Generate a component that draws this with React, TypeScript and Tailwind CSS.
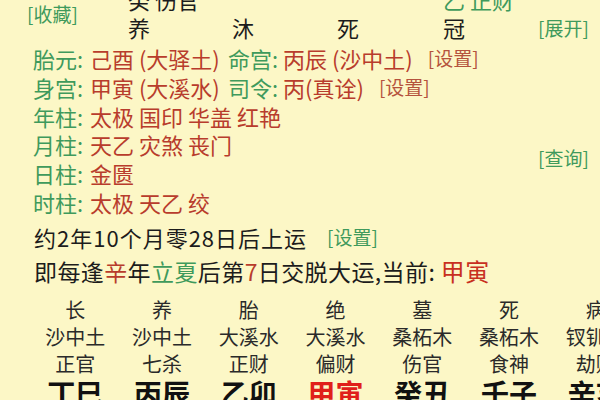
import React from 'react';

const GREEN = 'text-[#3f9a5c]';
const RED = 'text-[#b83c2c]';

const topCols = ['养', '沐', '死', '冠'];

const pillarRows = [
  { label: '年柱', items: ['太极', '国印', '华盖', '红艳'] },
  { label: '月柱', items: ['天乙', '灾煞', '丧门'] },
  { label: '日柱', items: ['金匮'] },
  { label: '时柱', items: ['太极', '天乙', '绞'] },
];

const grid = [
  { stage: '长', nayin: '沙中土', god: '正官', gz: '丁巳' },
  { stage: '养', nayin: '沙中土', god: '七杀', gz: '丙辰' },
  { stage: '胎', nayin: '大溪水', god: '正财', gz: '乙卯' },
  { stage: '绝', nayin: '大溪水', god: '偏财', gz: '甲寅', current: true },
  { stage: '墓', nayin: '桑柘木', god: '伤官', gz: '癸丑' },
  { stage: '死', nayin: '桑柘木', god: '食神', gz: '壬子' },
  { stage: '病', nayin: '钗钏金', god: '劫财', gz: '辛亥' },
];

export default function App() {
  return (
    <div className="w-[600px] h-[400px] overflow-hidden bg-[#fcf7c6] text-[#1c1c1c] font-['Noto_Sans_CJK_SC','Noto_Sans',sans-serif]">
      {/* hidden stems + growth stages */}
      <div className="grid grid-cols-[128px_104px_105px_106px_95px_62px] grid-rows-[28px_28px] -mt-[15px] text-[22px] leading-[28px]">
        <div className={`row-span-2 self-center pl-[27px] pt-[2px] text-[19px] leading-[20px] ${GREEN}`}>[收藏]</div>
        <div className="whitespace-nowrap">癸 伤官</div>
        <div />
        <div />
        <div className={`whitespace-nowrap ${GREEN}`}>乙 正财</div>
        <div />
        {topCols.map(c => (
          <div key={c}>{c}</div>
        ))}
        <div className={`text-[19px] pt-[1px] whitespace-nowrap ${GREEN}`}>[展开]</div>
      </div>

      {/* info rows */}
      <div className="flex mt-[3px]">
        <div className="w-[538px] pl-[33px] text-[22px] leading-[28.8px]">
          <div className="flex whitespace-nowrap">
            <span className={`w-[57px] ${GREEN}`}>胎元:</span>
            <span className={`w-[138px] ${RED}`}>己酉 (大驿土)</span>
            <span className={`w-[55px] ${GREEN}`}>命宫:</span>
            <span className={RED}>丙辰 (沙中土)</span>
            <span className="ml-[15px] text-[19px] text-[#b5533d]">[设置]</span>
          </div>
          <div className="flex whitespace-nowrap">
            <span className={`w-[57px] ${GREEN}`}>身宫:</span>
            <span className={`w-[138px] ${RED}`}>甲寅 (大溪水)</span>
            <span className={`w-[55px] ${GREEN}`}>司令:</span>
            <span className={RED}>丙(真诠)</span>
            <span className="ml-[15px] text-[19px] text-[#b5533d]">[设置]</span>
          </div>
          {pillarRows.map(r => (
            <div key={r.label} className="flex whitespace-nowrap">
              <span className={`w-[57px] ${GREEN}`}>{r.label}:</span>
              <span className={`flex gap-[5px] ${RED}`}>
                {r.items.map((it, i) => (
                  <span key={i}>{it}</span>
                ))}
              </span>
            </div>
          ))}
        </div>
        <div className={`mt-[104px] text-[19px] leading-[20px] h-[20px] whitespace-nowrap ${GREEN}`}>[查询]</div>
      </div>

      {/* luck start */}
      <div className="pl-[34px] mt-[6px] text-[22px] leading-[28px] whitespace-nowrap flex items-center">
        <span className="tracking-[1px]">约2年10个月零28日后上运</span>
        <span className={`ml-[20px] text-[19px] ${GREEN}`}>[设置]</span>
      </div>
      <div className="pl-[34px] mt-[6px] text-[23px] leading-[28px] whitespace-nowrap tracking-[0.4px]">
        即每逢<span className={RED}>辛</span>年<span className={GREEN}>立夏</span>后第
        <span className={RED}>7</span>日交脱大运,当前: <span className="text-[24px] text-[#c8301f]">甲寅</span>
      </div>

      {/* big luck grid */}
      <div className="ml-[32px] w-[607px] mt-[11px] grid grid-cols-7 text-center">
        {grid.map(g => (
          <div key={g.gz} className="flex flex-col items-center whitespace-nowrap">
            <div className="text-[20px] leading-[27px] text-[#2a2a2a]">{g.stage}</div>
            <div className="text-[20px] leading-[27px] text-[#2a2a2a]">{g.nayin}</div>
            <div className="text-[20px] leading-[27px] text-[#2a2a2a]">{g.god}</div>
            <div className={`text-[28px] leading-[32px] font-bold ${g.current ? 'text-[#e0201a]' : 'text-[#111]'}`}>
              {g.gz}
            </div>
          </div>
        ))}
      </div>
    </div>
  );
}
